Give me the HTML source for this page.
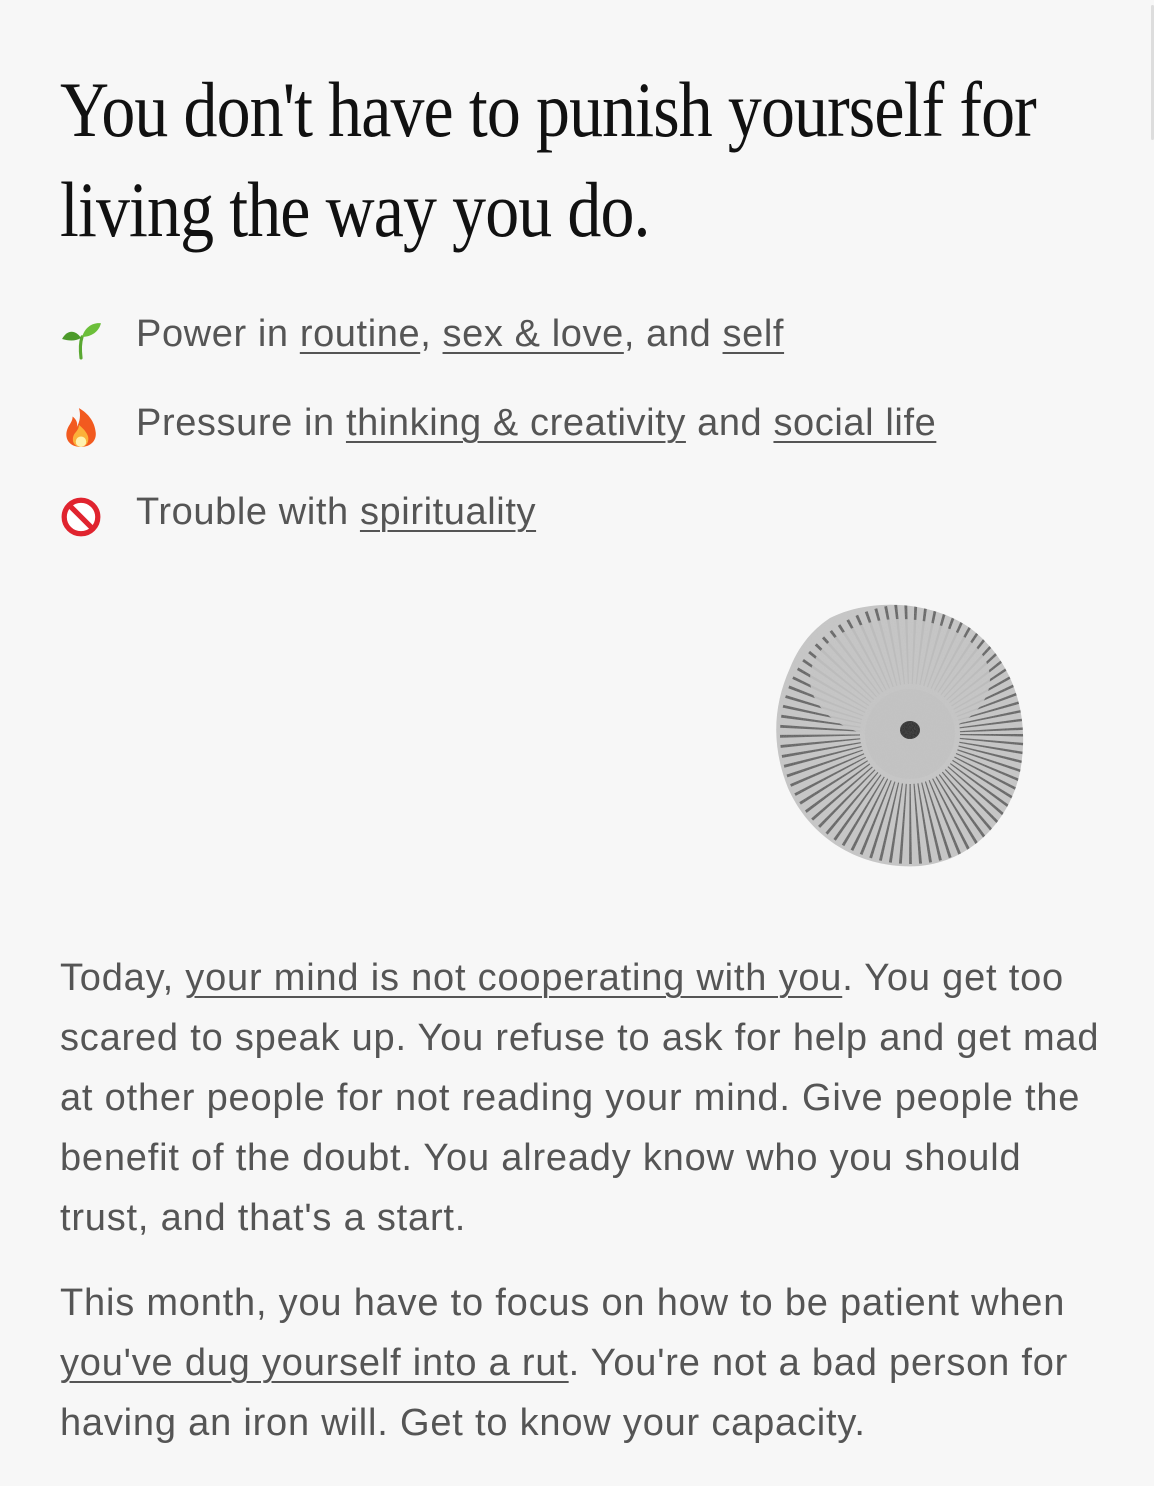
<!DOCTYPE html>
<html><head><meta charset="utf-8"><style>
html,body{margin:0;padding:0;background:#f7f7f7;}
body{width:1154px;height:1486px;position:relative;overflow:hidden;font-family:"Liberation Sans",sans-serif;}
.h{position:absolute;left:60px;font-family:"Liberation Serif",serif;font-size:78px;line-height:100px;color:#111;white-space:nowrap;transform-origin:0 0;transform:scaleX(0.87);letter-spacing:-1px;}
.t{position:absolute;left:60px;font-size:38px;line-height:60px;color:#555;white-space:nowrap;letter-spacing:0.8px;}
.li{left:136px;letter-spacing:0.6px;}
u{text-decoration:underline;text-decoration-thickness:2px;text-underline-offset:6px;}
.e{position:absolute;left:60px;width:42px;height:42px;}
.sb{position:absolute;right:0;top:5px;width:3px;height:135px;background:#ddd;border-radius:2px;}
</style></head><body>
<div class="sb"></div>
<div class="h" style="top:60px">You don't have to punish yourself for</div>
<div class="h" style="top:160px">living the way you do.</div>

<svg class="e" style="top:318px" viewBox="0 0 40 40"><path d="M20 38 C19 30 19 24 21 18" stroke="#5aa832" stroke-width="3" fill="none" stroke-linecap="round"/><path d="M20 19 C14 10 6 12 2 20 C9 22 15 22 20 19Z" fill="#4c9a2a"/><path d="M21 18 C24 8 32 4 39 5 C37 13 30 18 21 18Z" fill="#6cbf3a"/></svg>
<svg class="e" style="top:406px" viewBox="0 0 40 40"><path d="M20 39 C8 39 4 30 7 22 C9 17 12 15 12 10 C16 13 17 17 16 20 C19 15 20 8 18 2 C27 7 33 15 34 25 C35 33 29 39 20 39Z" fill="#f25a1f"/><path d="M20 39 C13 39 11 33 13 28 C15 24 18 23 18 18 C23 22 27 27 27 31 C27 36 24 39 20 39Z" fill="#fbb13a"/><ellipse cx="20" cy="34" rx="5" ry="5" fill="#fff2b0"/></svg>
<svg class="e" style="top:496px" viewBox="0 0 40 40"><circle cx="20" cy="20" r="16" fill="#fff" stroke="#e0242f" stroke-width="5"/><line x1="9" y1="9" x2="31" y2="31" stroke="#e0242f" stroke-width="5"/></svg>

<div class="t li" style="top:304px">Power in <u>routine</u>, <u>sex &amp; love</u>, and <u>self</u></div>
<div class="t li" style="top:393px">Pressure in <u>thinking &amp; creativity</u> and <u>social life</u></div>
<div class="t li" style="top:482px">Trouble with <u>spirituality</u></div>

<svg style="position:absolute;left:770px;top:598px" width="270" height="274" viewBox="0 0 270 274">
<defs><filter id="n"><feTurbulence type="fractalNoise" baseFrequency="0.9" numOctaves="2"/><feColorMatrix values="0 0 0 0 0.5  0 0 0 0 0.5  0 0 0 0 0.5  0 0 0 0.35 0"/><feComposite in2="SourceGraphic" operator="in"/></filter>
<clipPath id="c"><path d="M60 20 C100 0 160 2 200 30 C240 60 258 110 252 160 C248 210 210 262 150 268 C90 272 40 240 18 190 C2 150 2 110 20 70 C30 45 45 30 60 20Z"/></clipPath></defs>
<g clip-path="url(#c)">
<rect width="270" height="274" fill="#c8c8c8"/>
<g transform="translate(140,136)">
<circle r="90" fill="none" stroke="#3a3a3a" stroke-width="80" stroke-dasharray="2 5" opacity="0.75"/>
<ellipse cx="-10" cy="-55" rx="90" ry="60" fill="#c6c6c6" opacity="0.9"/>
<circle r="45" fill="#c4c4c4"/>
<ellipse cx="0" cy="-4" rx="10" ry="9" fill="#222"/>
</g>
<rect width="270" height="274" fill="#888" filter="url(#n)"/>
</g>
</svg>

<div class="t" style="top:948px">Today, <u>your mind is not cooperating with you</u>. You get too</div>
<div class="t" style="top:1008px">scared to speak up. You refuse to ask for help and get mad</div>
<div class="t" style="top:1068px">at other people for not reading your mind. Give people the</div>
<div class="t" style="top:1128px">benefit of the doubt. You already know who you should</div>
<div class="t" style="top:1188px">trust, and that's a start.</div>

<div class="t" style="top:1273px">This month, you have to focus on how to be patient when</div>
<div class="t" style="top:1333px"><u>you've dug yourself into a rut</u>. You're not a bad person for</div>
<div class="t" style="top:1393px">having an iron will. Get to know your capacity.</div>
</body></html>
